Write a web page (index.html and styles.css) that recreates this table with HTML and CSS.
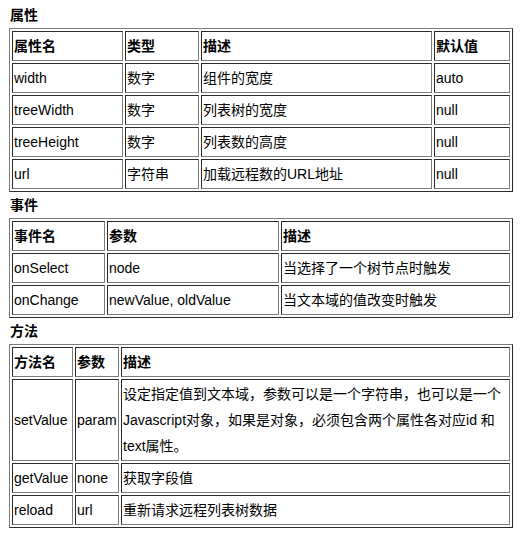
FILE: index.html
```html
<!DOCTYPE html>
<html lang="zh-CN">
<head>
<meta charset="utf-8">
<title>属性 事件 方法</title>
<link rel="stylesheet" href="styles.css">
</head>
<body>
<div class="page">
  <h3 class="sec">属性</h3>
  <table class="grid">
    <colgroup><col class="p1"><col class="p2"><col class="p3"><col></colgroup>
    <tr><th>属性名</th><th>类型</th><th>描述</th><th>默认值</th></tr>
    <tr><td>width</td><td>数字</td><td>组件的宽度</td><td>auto</td></tr>
    <tr><td>treeWidth</td><td>数字</td><td>列表树的宽度</td><td>null</td></tr>
    <tr><td>treeHeight</td><td>数字</td><td>列表数的高度</td><td>null</td></tr>
    <tr><td>url</td><td>字符串</td><td>加载远程数的URL地址</td><td>null</td></tr>
  </table>
  <h3 class="sec">事件</h3>
  <table class="grid">
    <colgroup><col class="e1"><col class="e2"><col></colgroup>
    <tr><th>事件名</th><th>参数</th><th>描述</th></tr>
    <tr><td>onSelect</td><td>node</td><td>当选择了一个树节点时触发</td></tr>
    <tr><td>onChange</td><td>newValue, oldValue</td><td>当文本域的值改变时触发</td></tr>
  </table>
  <h3 class="sec">方法</h3>
  <table class="grid">
    <colgroup><col class="m1"><col class="m2"><col></colgroup>
    <tr><th>方法名</th><th>参数</th><th>描述</th></tr>
    <tr><td>setValue</td><td>param</td><td>设定指定值到文本域，参数可以是一个字符串，也可以是一个<br>Javascript对象，如果是对象，必须包含两个属性各对应id 和<br>text属性。</td></tr>
    <tr><td>getValue</td><td>none</td><td>获取字段值</td></tr>
    <tr><td>reload</td><td>url</td><td>重新请求远程列表树数据</td></tr>
  </table>
</div>
</body>
</html>
```

FILE: styles.css
```css
html, body {
  margin: 0;
  padding: 0;
  background: #ffffff;
}
body {
  font-family: "Liberation Sans", "Noto Sans CJK SC", sans-serif;
  font-size: 14px;
  color: #000000;
}
.page {
  padding: 2px 0 0 9px;
}
.sec {
  margin: 0;
  padding-left: 1px;
  font-size: 14px;
  font-weight: bold;
  line-height: 26px;
}
.grid {
  width: 504px;
  table-layout: fixed;
  border-collapse: separate;
  border-spacing: 2px;
  border-style: solid;
  border-width: 1px;
  border-color: #7c7c7c #2a2a2a #2a2a2a #7c7c7c;
}
.grid th,
.grid td {
  padding: 1px;
  line-height: 26px;
  text-align: left;
  vertical-align: middle;
  border-style: solid;
  border-width: 1px;
  border-color: #2a2a2a #7c7c7c #7c7c7c #2a2a2a;
  white-space: nowrap;
}
.grid th {
  font-weight: bold;
}
.p1 { width: 111px; }
.p2 { width: 74px; }
.p3 { width: 231px; }
.e1 { width: 93px; }
.e2 { width: 172px; }
.m1 { width: 61px; }
.m2 { width: 44px; }
```
